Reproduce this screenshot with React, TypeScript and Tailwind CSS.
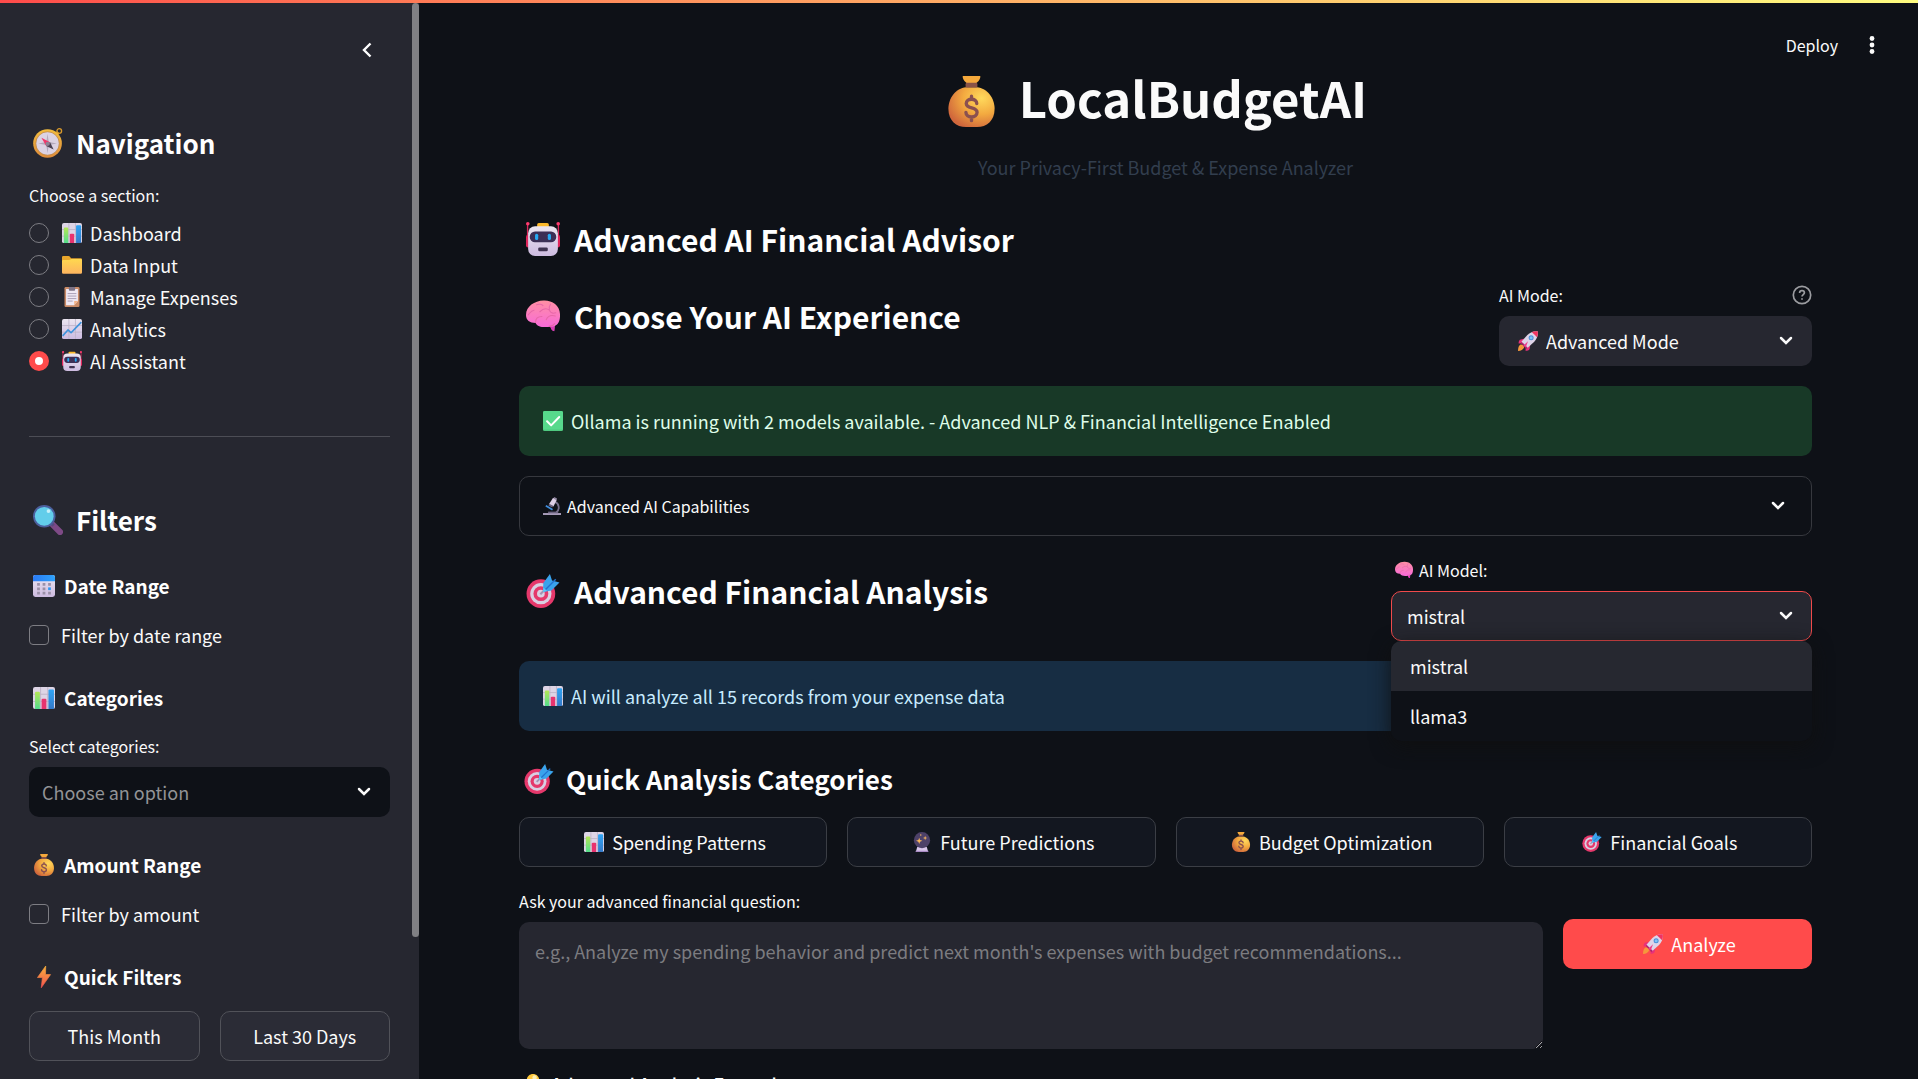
import React, { useState } from "react";

const art: Record<string, React.ReactNode> = {
  chart: (
    <>
      <rect width="32" height="32" rx="3" fill="#ded5e6" />
      <path d="M0 10.500H32M0 21H32M11 0V32M21.500 0V32" stroke="#bdb3c7" strokeWidth="1.300" />
      <path d="M3 8.500a1.500 1.500 0 0 1 1.500-1.500h4A1.500 1.500 0 0 1 10 8.500V32H3z" fill="url(#g-green)" />
      <path d="M12.500 18.500a1.500 1.500 0 0 1 1.500-1.500h4a1.500 1.500 0 0 1 1.500 1.500V32h-7z" fill="#e8336f" />
      <path d="M22.500 5A1.500 1.500 0 0 1 24 3.500h5A1.500 1.500 0 0 1 30.500 5V32h-8z" fill="url(#g-blue)" />
    </>
  ),
  line: (
    <>
      <rect width="32" height="32" rx="3" fill="url(#g-paper)" />
      <path d="M0 10.500H32M0 21H32M11 0V32M21.500 0V32" stroke="#bdb3c7" strokeWidth="1.300" />
      <path d="M1 27l8.500-9.500 5 4.500L31 5" fill="none" stroke="#3d93dc" strokeWidth="2.600" strokeLinejoin="round" />
    </>
  ),
  folder: (
    <>
      <path d="M0 3.500A2 2 0 0 1 2 1.500h8.500a2.500 2.500 0 0 1 1.900.9L14.500 5H30a2 2 0 0 1 2 2v6H0z" fill="#e8a62c" />
      <path d="M0 10a2 2 0 0 1 2-2h9.500L15 6.500h15a2 2 0 0 1 2 2V28a2 2 0 0 1-2 2H2a2 2 0 0 1-2-2z" fill="url(#g-folder)" />
    </>
  ),
  clipboard: (
    <>
      <rect x="4" y="0" width="24" height="32" rx="2" fill="#c98a66" />
      <path d="M6.500 3h19v19.500L19.500 29h-13z" fill="#efe8f3" />
      <path d="M19.500 29v-6.500h6z" fill="#f3b287" />
      <path d="M11 0h10v4.500a1.500 1.500 0 0 1-1.500 1.500h-7A1.500 1.500 0 0 1 11 4.500z" fill="#7d7386" />
      <path d="M9 10.500h14M9 14.500h14M9 18.500h14M9 22.500h8" stroke="#a79cb3" strokeWidth="1.500" />
    </>
  ),
  robot: (
    <>
      <path d="M1.500 2v16M30.500 2v16" stroke="#d8285c" strokeWidth="1.300" />
      <circle cx="1.700" cy="1.700" r="1.700" fill="#ff3a6e" />
      <circle cx="30.300" cy="1.700" r="1.700" fill="#ff3a6e" />
      <rect x="0" y="12" width="4" height="12" rx="2" fill="#e0265c" />
      <rect x="28" y="12" width="4" height="12" rx="2" fill="#e0265c" />
      <rect x="10.500" y="1" width="11" height="5" rx="1.500" fill="#fcb92b" />
      <rect x="2" y="4" width="28" height="28" rx="6.500" fill="url(#g-paper)" />
      <rect x="3.500" y="9" width="25" height="10" rx="5" fill="#3c2f56" />
      <rect x="8.500" y="11" width="3" height="6" rx="1.500" fill="#27a9f2" />
      <rect x="20.500" y="11" width="3" height="6" rx="1.500" fill="#27a9f2" />
      <rect x="11.500" y="24" width="9" height="3.500" rx="1.200" fill="#3f3250" />
    </>
  ),
  compass: (
    <>
      <circle cx="28" cy="3.200" r="2.500" fill="none" stroke="#d99a2b" strokeWidth="1.400" />
      <path d="M24 8l3-3.500" stroke="#d99a2b" strokeWidth="3" />
      <circle cx="15.500" cy="16.500" r="15.300" fill="url(#g-gold)" />
      <circle cx="15.500" cy="16.500" r="12.500" fill="#dcd3e3" stroke="#b9782b" strokeWidth=".7" />
      <path d="M15.500 6l1.300 9 8.700 1.500-8.700 1.500-1.300 9-1.300-9-8.700-1.500 8.700-1.500z" fill="#b3a9ba" />
      <path d="M9 10.500l9.200 4.700-4.200 4z" fill="#f0386a" />
      <path d="M22 23l-8-3.800 4.200-4z" fill="#4a4152" />
      <circle cx="15.700" cy="16.900" r="2.300" fill="#8d8295" />
    </>
  ),
  search: (
    <>
      <path d="M20.500 20.500l8.300 8.300" stroke="#7e4a86" strokeWidth="6.500" strokeLinecap="round" />
      <path d="M19 19l3 3" stroke="#5a4a80" strokeWidth="3.500" />
      <circle cx="12" cy="12" r="12" fill="#4c5f9d" />
      <circle cx="12" cy="12" r="10" fill="#62cdea" />
      <circle cx="16.500" cy="6.500" r="2" fill="#c4f0fa" />
    </>
  ),
  calendar: (
    <>
      <rect width="32" height="32" rx="3.500" fill="url(#g-paper)" />
      <path d="M0 9V3.500A3.500 3.500 0 0 1 3.500 0h25A3.500 3.500 0 0 1 32 3.500V9z" fill="url(#g-sky)" />
      <path d="M6 11.500h4v4H6zM14 11.500h4v4h-4zM22 11.500h4v4h-4zM6 18h4v4H6zM14 18h4v4h-4zM6 24.500h4v4H6zM14 24.500h4v4h-4zM22 24.500h4v4h-4z" fill="#9b90a8" />
      <path d="M22 18h4v4h-4z" fill="#2f97f5" />
    </>
  ),
  bag: (
    <>
      <path d="M10.500 0h11c.3 1.800-1.200 3.400-2.600 4.600h-5.800C11.700 3.400 10.200 1.800 10.500 0z" fill="#f5a93c" />
      <path d="M12.600 7h6.800C26 7.500 30.500 14 30.500 20.500 30.500 28 25.500 32 19.500 32h-7C6.500 32 1.500 28 1.500 20.500 1.500 14 6 7.500 12.600 7z" fill="url(#g-bag)" />
      <rect x="12.300" y="4.300" width="7.400" height="2.900" rx=".8" fill="#8a5347" />
      <path d="M19.300 17.300c0-1.800-1.500-2.700-3.300-2.700s-3.300.9-3.300 2.600c0 3.700 6.800 1.900 6.800 5.600 0 1.800-1.500 2.900-3.500 2.900s-3.500-1-3.500-2.900M16 12.700v2M16 25.700v2.300" fill="none" stroke="#8a5050" strokeWidth="2.100" strokeLinecap="round" />
    </>
  ),
  bolt: <path d="M18.500 0L6.500 16.800h7.200L12 31.700 25.500 12.500h-7.300z" fill="url(#g-bolt)" stroke="url(#g-bolt)" strokeLinejoin="round" />,
  brain: (
    <>
      <path d="M16.500 1.500C24 1 31.800 6 32 14c.2 6-1 9.500-5 11.500l-.5 4.500c-2-.3-3-2-3.500-4-5 .8-12 1-14-3.500C3.500 22.500 0 20 0 15 0 7 8 1.800 16.500 1.500z" fill="url(#g-brain)" />
      <path d="M2 15c1.500-1.500 2.500-4 5.500-4.500M9 22c0-3.500 2-5.500 6-5.500M10 5.500c2-1 5-.5 6 .7M13 12c3-3 6.500-3.500 9-1.500 1 2.500 3 3.500 6 2.500M19 19.500c1.500-3.500 5-4.500 8.500-3.500M22 25.500c2.500 0 4-1 5-2.500M23 5c-1 1.500-1.500 3-1 5.500" fill="none" stroke="#e868a8" strokeWidth="1" strokeLinecap="round" />
      <path d="M23 26c2 .3 3 0 4-.5l-.4 4.900c-2-.4-3.100-2.100-3.600-4.400z" fill="#d83bb5" />
    </>
  ),
  check: (
    <>
      <rect width="32" height="32" rx="2.500" fill="#4fca80" />
      <rect width="32" height="29.500" rx="2.500" fill="#57d98c" />
      <path d="M6.500 16.500l6.500 6.500L26 9.500" fill="none" stroke="#fff" strokeWidth="3.200" strokeLinecap="round" strokeLinejoin="round" />
    </>
  ),
  microscope: (
    <>
      <path d="M21 8.500c8 2.500 9.500 14 2.500 19" fill="none" stroke="#77708b" strokeWidth="3.200" />
      <path d="M0 28.500h32V32H0z" fill="#a79bb8" />
      <path d="M9 26h18v2.800H9z" fill="#6d6480" />
      <path d="M5 15.500l12 7" stroke="#3f8ede" strokeWidth="3.200" />
      <path d="M18 1.500l6.500 3.500-6 12-8-4z" fill="#ddd0e6" />
      <path d="M20 0l5 2.500-1.300 3-5-2.600z" fill="#8c829c" />
      <path d="M11 12l7 3.600-1.700 3-6.600-3.300z" fill="#6d6480" />
    </>
  ),
  target: (
    <>
      <circle cx="14" cy="18.500" r="13.500" fill="#e5386b" />
      <circle cx="14" cy="18.500" r="10" fill="#d9cfe2" />
      <circle cx="14" cy="18.500" r="7" fill="#e5386b" />
      <circle cx="14" cy="18.500" r="3.600" fill="#d9cfe2" />
      <path d="M13.500 19L24 8.500" stroke="#a293b3" strokeWidth="2" />
      <path d="M16 17l.3-8.500L22.500 0l2 6 7 2-7.500 7.500z" fill="#3aa3ec" />
      <path d="M17 16L28 5" stroke="#2272cf" strokeWidth="1.300" />
      <path d="M16 17l.3-4.500 3.500 3.500z" fill="#5fc6f5" />
    </>
  ),
  rocket: (
    <>
      <path d="M3 22.500c3-2 6 .5 7 3.500-1.500 3.500-5.500 5.800-10 6 0-4 .8-7.500 3-9.500z" fill="#f5983c" />
      <path d="M9.500 12.500L3 14c-1.300 1.300-2 3.500-2 6l7-.5zM19.500 22.500L18.500 29c-1.200 1.500-3.500 2.500-6.500 2.500l.7-7z" fill="#e8307a" />
      <path d="M31.500.5c1 6-1 12-5.500 16.500L15 27 5.500 17 15 6.500C19.500 2 25.500-.3 31.500.5z" fill="#ded4e8" />
      <path d="M31.500.5c.6 3.500.2 6.500-1 9.500L22 1.700c3-1.100 6-1.700 9.500-1.200z" fill="#f2335f" />
      <path d="M5.500 17l10 9.800L13 29l-2.700-4.200L5 20z" fill="#b02570" />
      <circle cx="21" cy="10.700" r="4" fill="#4c8fd8" />
      <circle cx="21" cy="10.700" r="2.400" fill="#7fc4f5" />
      <path d="M8 24L16 16.500l-3.300 9.200z" fill="#f03e8b" />
    </>
  ),
  crystal: (
    <>
      <path d="M8.500 23.500h15L26 32H6z" fill="#d8c6ea" />
      <path d="M6 30h20v2H6z" fill="#a98bc4" />
      <circle cx="16" cy="13" r="13" fill="#4d4168" />
      <path d="M11.500 9l1.300 3.800 3.800 1.300-3.800 1.300-1.300 3.900-1.300-3.900-3.800-1.300 3.800-1.300z" fill="#fbb95b" />
      <path d="M21 6l.9 2.600 2.600.9-2.600.9-.9 2.600-.9-2.600-2.600-.9 2.600-.9z" fill="#fbb95b" />
      <circle cx="14" cy="4.800" r="1.200" fill="#fbb95b" />
    </>
  ),
  bulb: (
    <>
      <path d="M16 0c6 0 10 4.500 10 10 0 5.500-4 8-5 13H11c-1-5-5-7.500-5-13C6 4.500 10 0 16 0z" fill="#ffc93d" />
      <circle cx="18.500" cy="5.500" r="3.500" fill="#fff0b3" />
      <path d="M11.500 24h9v5l-2.500 3h-4l-2.500-3z" fill="#a79dae" />
    </>
  ),
};

const iconSizes = {
  sm: "size-[18px]",
  md: "size-5",
  lg: "size-[22px]",
  xl: "size-[30px]",
  "2xl": "size-[34px]",
  "3xl": "size-[51px]",
};

function Emoji({ name, size = "md" }: { name: string; size?: keyof typeof iconSizes }) {
  return (
    <svg viewBox="0 0 32 32" aria-hidden="true" className={`${iconSizes[size]} shrink-0`}>
      {art[name]}
    </svg>
  );
}

function Gradients() {
  const defs: [string, string, string][] = [
    ["g-green", "#b5e655", "#53dd8c"],
    ["g-blue", "#2fa5f5", "#3479c9"],
    ["g-paper", "#ece6f1", "#cdbbe0"],
    ["g-folder", "#ffd84f", "#fdb45f"],
    ["g-gold", "#f3bd3e", "#dd8b3a"],
    ["g-bolt", "#f8b13c", "#f2514f"],
    ["g-brain", "#ff8fa3", "#f765e0"],
  ];
  return (
    <svg className="absolute size-0" aria-hidden="true">
      <defs>
        {defs.map(([id, a, b]) => (
          <linearGradient key={id} id={id} x1="0" y1="0" x2="0" y2="1">
            <stop offset="0" stopColor={a} />
            <stop offset="1" stopColor={b} />
          </linearGradient>
        ))}
        <linearGradient id="g-sky" x1="0" y1="0" x2="1" y2="0">
          <stop offset="0" stopColor="#2b7bf5" />
          <stop offset="1" stopColor="#2fa2fa" />
        </linearGradient>
        <radialGradient id="g-bag" cx=".72" cy=".28" r=".8">
          <stop offset="0" stopColor="#ffd95c" />
          <stop offset=".5" stopColor="#f3aa40" />
          <stop offset="1" stopColor="#d0673c" />
        </radialGradient>
      </defs>
    </svg>
  );
}

function Chevron() {
  return (
    <svg viewBox="0 0 14 10" className="h-[10px] w-[14px]" fill="none" stroke="#fafafa" strokeWidth="2.500" aria-hidden="true">
      <path d="M2 2l5 5 5-5" strokeLinecap="round" />
    </svg>
  );
}

function SelectChevron() {
  return (
    <span className="pointer-events-none absolute inset-y-0 right-[19px] flex items-center">
      <Chevron />
    </span>
  );
}

function SideTitle({ icon, children }: { icon: string; children: React.ReactNode }) {
  return (
    <h2 className="flex items-center gap-[13px] pl-1 text-[26px] leading-9 font-bold text-white">
      <Emoji name={icon} size="xl" />
      {children}
    </h2>
  );
}

function SideHeading({ icon, children }: { icon: string; children: React.ReactNode }) {
  return (
    <h3 className="flex items-center gap-[9px] pl-1 text-[19px] leading-8 font-bold text-white">
      <Emoji name={icon} size="lg" />
      {children}
    </h3>
  );
}

function MainHeading({ icon, children }: { icon: string; children: React.ReactNode }) {
  return (
    <h2 className="flex items-center gap-[14px] pl-[7px] text-[30px] leading-[42px] font-bold text-white">
      <Emoji name={icon} size="2xl" />
      {children}
    </h2>
  );
}

function Check({ children }: { children: React.ReactNode }) {
  return (
    <label className="flex h-8 items-center gap-3">
      <input type="checkbox" className="size-5 appearance-none rounded-[4px] border border-[#7d7d83]" />
      {children}
    </label>
  );
}

const sections = [
  ["chart", "Dashboard"],
  ["folder", "Data Input"],
  ["clipboard", "Manage Expenses"],
  ["line", "Analytics"],
  ["robot", "AI Assistant"],
];

function Sidebar() {
  const [section, setSection] = useState("AI Assistant");
  return (
    <aside className="relative w-[419px] shrink-0 overflow-hidden bg-[#262730] px-[29px]">
      <div className="absolute top-0 right-0 h-[934px] w-[7px] rounded-full bg-[#808084]" />
      <div className="flex h-[122px] justify-end pt-[34px] pr-[13px]">
        <button aria-label="Collapse sidebar" className="flex size-5 items-center justify-center pt-[6px]">
          <svg viewBox="0 0 10 16" className="h-4 w-[10px]" fill="none" stroke="#fff" strokeWidth="2.400" aria-hidden="true">
            <path d="M8.500 1.500L2 8l6.500 6.500" />
          </svg>
        </button>
      </div>
      <SideTitle icon="compass">Navigation</SideTitle>
      <fieldset className="mt-5">
        <legend className="text-[16px] leading-7">Choose a section:</legend>
        <div className="pt-2">
          {sections.map(([icon, name]) => (
            <label key={name} className="flex h-8 items-center">
              <input
                type="radio"
                name="section"
                checked={section === name}
                onChange={() => setSection(name)}
                className="size-5 appearance-none rounded-full border border-[#7d7d83] checked:border-[6px] checked:border-[#ff4b4b] checked:bg-white"
              />
              <span className="ml-[13px] flex items-center gap-2">
                <Emoji name={icon} />
                {name}
              </span>
            </label>
          ))}
        </div>
      </fieldset>
      <hr className="mt-[59px] border-[#4c4d55]" />
      <div className="mt-[65px]">
        <SideTitle icon="search">Filters</SideTitle>
      </div>
      <div className="mt-8 mb-[17px]">
        <SideHeading icon="calendar">Date Range</SideHeading>
      </div>
      <Check>Filter by date range</Check>
      <div className="mt-[31px] mb-[18px]">
        <SideHeading icon="chart">Categories</SideHeading>
      </div>
      <label htmlFor="categories" className="block text-[16px] leading-7">
        Select categories:
      </label>
      <div className="relative mt-[7px]">
        <select id="categories" className="h-[50px] w-full appearance-none rounded-[10px] bg-[#0e1117] px-[13px] text-[#929396]">
          <option>Choose an option</option>
        </select>
        <SelectChevron />
      </div>
      <div className="mt-8 mb-[17px]">
        <SideHeading icon="bag">Amount Range</SideHeading>
      </div>
      <Check>Filter by amount</Check>
      <div className="mt-[31px] mb-[18px]">
        <SideHeading icon="bolt">Quick Filters</SideHeading>
      </div>
      <div className="grid grid-cols-2 gap-5">
        {["This Month", "Last 30 Days"].map((t) => (
          <button key={t} className="h-[50px] rounded-[10px] border border-[#515259] bg-[#2b2c36]">
            {t}
          </button>
        ))}
      </div>
    </aside>
  );
}

const analyses = [
  ["chart", "Spending Patterns"],
  ["crystal", "Future Predictions"],
  ["bag", "Budget Optimization"],
  ["target", "Financial Goals"],
];

function ModelSelect() {
  return (
    <div className="w-[421px]">
      <label htmlFor="model" className="flex items-center gap-[6px] pl-1 text-[16px] leading-7">
        <Emoji name="brain" size="sm" />
        AI Model:
      </label>
      <div className="relative mt-[7px]">
        <select id="model" className="h-[50px] w-full appearance-none rounded-[10px] border border-[#f04a4b] bg-[#262730] px-[15px]">
          <option>mistral</option>
          <option>llama3</option>
        </select>
        <SelectChevron />
        <ul role="listbox" aria-label="AI Model" className="absolute inset-x-0 top-full z-10 overflow-hidden rounded-[10px] bg-[#0e1117] shadow-[0_5px_20px_rgba(16,16,16,0.9)]">
          <li role="option" aria-selected="true" className="h-[50px] bg-[#262830] px-[19px] leading-[50px]">
            mistral
          </li>
          <li role="option" aria-selected="false" className="h-[50px] px-[19px] leading-[50px]">
            llama3
          </li>
        </ul>
      </div>
    </div>
  );
}

function Main() {
  return (
    <main className="min-w-0 flex-1 overflow-hidden">
      <header className="flex h-16 items-start justify-end gap-6 pt-7 pr-[36px]">
        <button className="text-[16px] leading-7">Deploy</button>
        <button aria-label="Menu" className="flex h-7 w-5 items-center justify-center">
          <svg viewBox="0 0 6 18" className="h-[18px] w-[6px]" fill="#fafafa" aria-hidden="true">
            <circle cx="3" cy="2.500" r="2.400" />
            <circle cx="3" cy="9" r="2.400" />
            <circle cx="3" cy="15.500" r="2.400" />
          </svg>
        </button>
      </header>
      <div className="pr-[106px] pl-[100px]">
        <h1 className="flex items-end justify-center gap-[22px] pr-[18px] text-[49px] leading-[60px] font-bold">
          <Emoji name="bag" size="3xl" />
          LocalBudgetAI
        </h1>
        <p className="mt-[25px] text-center leading-[30px] text-[#323e4e]">Your Privacy-First Budget &amp; Expense Analyzer</p>
        <div className="mt-9">
          <MainHeading icon="robot">Advanced AI Financial Advisor</MainHeading>
        </div>

        <div className="mt-[21px] flex justify-between">
          <div className="pt-[14px]">
            <MainHeading icon="brain">Choose Your AI Experience</MainHeading>
          </div>
          <div className="w-[313px]">
            <div className="flex items-center justify-between text-[16px] leading-7">
              <label htmlFor="mode">AI Mode:</label>
              <button aria-label="Help" className="flex size-5 items-center justify-center">
                <svg viewBox="0 0 20 20" className="size-5" fill="none" stroke="#9b9ca0" strokeWidth="1.700" aria-hidden="true">
                  <circle cx="10" cy="10" r="8.700" />
                  <path d="M7.600 7.900c0-1.300 1-2.200 2.400-2.200s2.400.9 2.400 2.100c0 1.700-2.400 1.900-2.400 3.700M10 13.300v1.500" />
                </svg>
              </button>
            </div>
            <div className="relative mt-[7px]">
              <span className="pointer-events-none absolute inset-y-0 left-[19px] flex items-center">
                <Emoji name="rocket" />
              </span>
              <select id="mode" className="h-[50px] w-full appearance-none rounded-[10px] bg-[#262730] pl-[47px]">
                <option>Advanced Mode</option>
              </select>
              <SelectChevron />
            </div>
          </div>
        </div>

        <div role="status" className="mt-5 flex items-center gap-2 rounded-[10px] bg-[#183927] px-6 py-5 leading-[30px] text-[#dffde9]">
          <Emoji name="check" />
          Ollama is running with 2 models available. - Advanced NLP &amp; Financial Intelligence Enabled
        </div>

        <button aria-expanded="false" className="mt-5 flex h-[60px] w-full items-center gap-[6px] rounded-[10px] border border-[#36383e] pr-[26px] pl-[23px] text-[16px]">
          <Emoji name="microscope" size="sm" />
          <span className="flex-1 text-left">Advanced AI Capabilities</span>
          <Chevron />
        </button>

        <div className="mt-5 flex justify-between">
          <div className="pt-[14px]">
            <MainHeading icon="target">Advanced Financial Analysis</MainHeading>
          </div>
          <ModelSelect />
        </div>

        <div role="status" className="mt-5 flex items-center gap-2 rounded-[10px] bg-[#172d43] px-6 py-5 leading-[30px] text-[#c7ebff]">
          <Emoji name="chart" />
          AI will analyze all 15 records from your expense data
        </div>

        <h3 className="mt-[30px] flex items-center gap-3 pl-[5px] text-[26px] leading-9 font-bold text-white">
          <Emoji name="target" size="xl" />
          Quick Analysis Categories
        </h3>
        <div className="mt-5 grid grid-cols-4 gap-5">
          {analyses.map(([icon, name]) => (
            <button key={name} className="flex h-[50px] items-center justify-center gap-2 rounded-[10px] border border-[#3b3e45] bg-[#131720] pl-1">
              <Emoji name={icon} />
              {name}
            </button>
          ))}
        </div>

        <div className="mt-5 flex gap-5">
          <div className="flex flex-1 flex-col">
            <label htmlFor="question" className="text-[16px] leading-7">
              Ask your advanced financial question:
            </label>
            <textarea
              id="question"
              placeholder="e.g., Analyze my spending behavior and predict next month's expenses with budget recommendations..."
              className="mt-[7px] h-[127px] w-full resize-y rounded-[10px] bg-[#262730] px-4 py-[14px] leading-[30px] placeholder:text-[#7c7c80]"
            />
          </div>
          <div className="w-[249px] pt-8">
            <button className="flex h-[50px] w-full items-center justify-center gap-2 rounded-[10px] bg-[#ff4b4b] pl-1 text-white">
              <Emoji name="rocket" />
              Analyze
            </button>
          </div>
        </div>

        <h4 className="mt-5 flex items-center gap-2 pl-1 leading-[30px] font-medium text-white">
          <Emoji name="bulb" />
          Advanced Analysis Examples
        </h4>
      </div>
    </main>
  );
}

export default function App() {
  return (
    <div className="flex h-screen flex-col overflow-hidden bg-[#0e1117] font-['Noto_Sans_CJK_SC',sans-serif] text-[18px] text-[#fafafa]">
      <Gradients />
      <div className="h-[3px] shrink-0 bg-linear-to-r from-[#ff4b4b] to-[#fffd80]" />
      <div className="flex min-h-0 flex-1">
        <Sidebar />
        <Main />
      </div>
    </div>
  );
}
